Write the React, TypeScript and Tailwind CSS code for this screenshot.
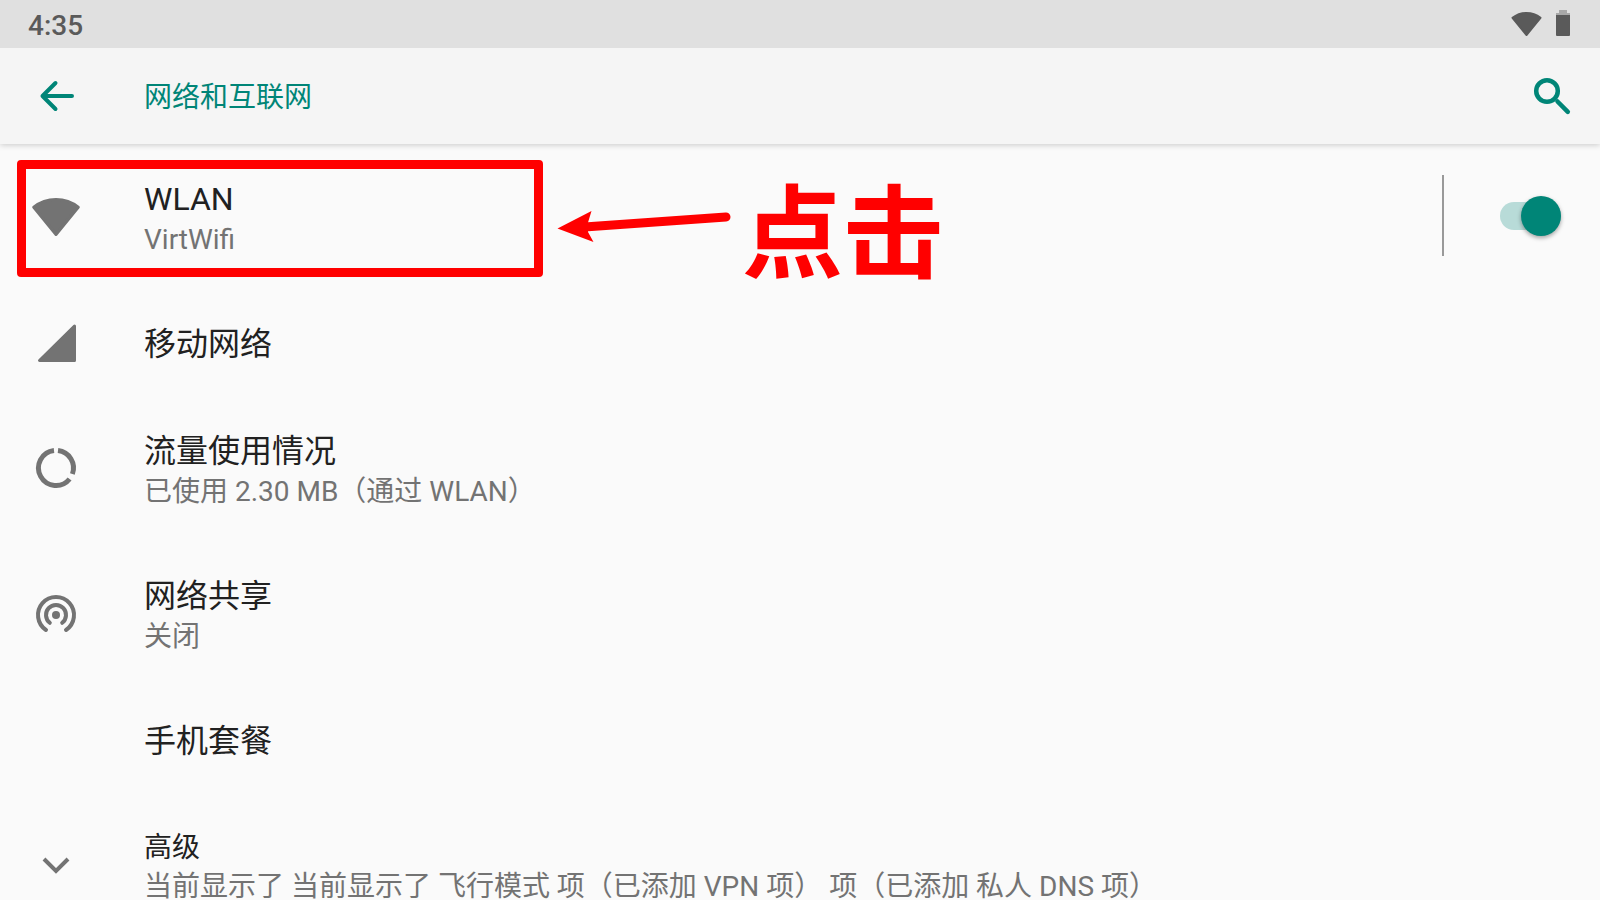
import { useState } from 'react'
import type { ReactNode } from 'react'

const FONT = "font-[Roboto,'Noto_Sans_CJK_SC',sans-serif]"

function WifiIcon({ className }: { className: string }) {
  return (
    <svg viewBox="0 0 48 38" className={className} fill="currentColor" stroke="currentColor" strokeWidth="3" strokeLinejoin="round" aria-hidden="true">
      <path d="M24 36.5 1.8 9.2C8 4.2 15.6 1.5 24 1.5S40 4.2 46.2 9.2Z" />
    </svg>
  )
}

function SignalIcon() {
  return (
    <svg viewBox="0 0 48 48" className="size-12" fill="currentColor" stroke="currentColor" strokeWidth="3" strokeLinejoin="round" aria-hidden="true">
      <path d="M7.5 41.500H42.500V7Z" />
    </svg>
  )
}

function DataUsageIcon() {
  return (
    <svg viewBox="0 0 48 48" className="size-12" fill="none" stroke="currentColor" strokeWidth="5" aria-hidden="true">
      <path d="M26 5.600A17.500 17.500 0 0 1 40.400 29" />
      <path d="M37.600 34A17.500 17.500 0 1 1 22 5.600" />
    </svg>
  )
}

function HotspotIcon() {
  return (
    <svg viewBox="0 0 48 48" className="size-12" fill="none" stroke="currentColor" strokeWidth="4" strokeLinecap="round" aria-hidden="true">
      <circle cx="24" cy="25" r="4" fill="currentColor" stroke="none" />
      <path d="M17.8 32.800A10 10 0 1 1 30.200 32.800" />
      <path d="M14 40A18 18 0 1 1 34 40" />
    </svg>
  )
}

function ChevronIcon() {
  return (
    <svg viewBox="0 0 48 48" className="size-12" fill="none" stroke="currentColor" strokeWidth="4" aria-hidden="true">
      <path d="M12 17 24 29 36 17" />
    </svg>
  )
}

type Item = { title: string; summary?: string; icon?: ReactNode; small?: boolean }

const ITEMS: Item[] = [
  { title: '移动网络', icon: <SignalIcon /> },
  { title: '流量使用情况', summary: '已使用 2.30 MB（通过 WLAN）', icon: <DataUsageIcon /> },
  { title: '网络共享', summary: '关闭', icon: <HotspotIcon /> },
  { title: '手机套餐' },
  {
    title: '高级',
    summary: '当前显示了 当前显示了 飞行模式 项（已添加 VPN 项） 项（已添加 私人 DNS 项）',
    icon: <ChevronIcon />,
    small: true,
  },
]

function Row({ title, summary, icon, small }: Item) {
  return (
    <button type="button" className={`flex w-full items-center text-left ${summary ? 'h-[145px]' : 'h-[107px]'}`}>
      <span className="flex w-36 shrink-0 pl-8 text-[#737373]">{icon}</span>
      <span className={`flex min-w-0 flex-col whitespace-nowrap ${summary ? 'pt-1' : 'pt-0.5'}`}>
        <span className={`text-[#212121] ${small ? 'text-[28px] leading-[38px]' : 'text-[32px] leading-[42px]'}`}>{title}</span>
        {summary && <span className="text-[28px] leading-10 text-[#737373]">{summary}</span>}
      </span>
    </button>
  )
}

function Callout() {
  return (
    <div className="pointer-events-none absolute inset-0 text-[#ff0000]">
      <div className="absolute top-4 left-[17px] h-[117px] w-[526px] rounded border-9 border-current" />
      <svg viewBox="0 0 180 40" className="absolute top-16 left-[554px] h-10 w-[180px]" aria-hidden="true">
        <path d="M34 18.700 172 9" stroke="currentColor" strokeWidth="9" strokeLinecap="round" />
        <path d="M3.500 20.500 37.500 3 34 14.500 34 24 39.500 34Z" fill="currentColor" />
      </svg>
      <span className="absolute top-5 left-[742px] text-[101px] leading-[144px] font-bold">点击</span>
    </div>
  )
}

export default function App() {
  const [wlan, setWlan] = useState(true)

  return (
    <div lang="zh-CN" className={`flex h-screen flex-col overflow-hidden bg-[#fafafa] ${FONT}`}>
      <div className="z-20 flex h-12 shrink-0 items-center justify-between bg-[#e0e0e0] pr-[30px] pl-7 text-[#5a5a5a]">
        <span className="pt-1 text-[28px] leading-8 font-medium">4:35</span>
        <div className="flex items-center gap-3.5">
          <WifiIcon className="h-6 w-[31px]" />
          <svg viewBox="0 0 14 26" className="mb-0.5 h-[26px] w-3.5" aria-hidden="true">
            <path d="M3 0H11V3H14V6H0V3H3Z" fill="#a8a8a8" />
            <path d="M0 5H14V25A1 1 0 0 1 13 26H1A1 1 0 0 1 0 25Z" fill="currentColor" />
          </svg>
        </div>
      </div>

      <header className="z-10 flex h-24 shrink-0 items-center bg-[#f5f5f5] pr-6 pl-8 text-[#008577] shadow-[0_1px_6px_rgba(0,0,0,0.2)]">
        <button type="button" aria-label="返回" className="w-28">
          <svg viewBox="0 0 48 48" className="size-12" fill="none" stroke="currentColor" strokeWidth="4" strokeLinecap="round" strokeLinejoin="round" aria-hidden="true">
            <path d="M23.500 11 10.500 24 23.500 37M10.500 24H40" />
          </svg>
        </button>
        <h1 className="flex-1 pt-1 text-[28px] leading-9">网络和互联网</h1>
        <button type="button" aria-label="搜索">
          <svg viewBox="0 0 48 48" className="size-12" fill="none" stroke="currentColor" strokeWidth="4.500" strokeLinecap="round" aria-hidden="true">
            <circle cx="19" cy="19" r="10.800" />
            <path d="M29.500 29.500 39.800 39.800" />
          </svg>
        </button>
      </header>

      <main className="min-h-0 flex-1 overflow-hidden">
        <div className="relative flex items-center">
          <div className="min-w-0 flex-1">
            <Row title="WLAN" summary="VirtWifi" icon={<WifiIcon className="h-[38px] w-12" />} />
          </div>
          <div className="mb-0.5 h-[81px] w-0.5 bg-[#999999]" />
          <label className="mr-[39px] mb-0.5 ml-14 flex cursor-pointer">
            <input
              type="checkbox"
              role="switch"
              aria-label="WLAN"
              checked={wlan}
              onChange={e => setWlan(e.target.checked)}
              className="peer sr-only"
            />
            <span className="flex h-7 w-[61px] items-center rounded-full bg-[#bdbdbd] peer-checked:justify-end peer-checked:bg-[#b8dbd8] peer-checked:[&>span]:bg-[#008577]">
              <span className="size-10 rounded-full bg-[#f5f5f5] shadow-[0_2px_4px_rgba(0,0,0,0.35)]" />
            </span>
          </label>
          <Callout />
        </div>
        {ITEMS.map(item => <Row key={item.title} {...item} />)}
      </main>
    </div>
  )
}
